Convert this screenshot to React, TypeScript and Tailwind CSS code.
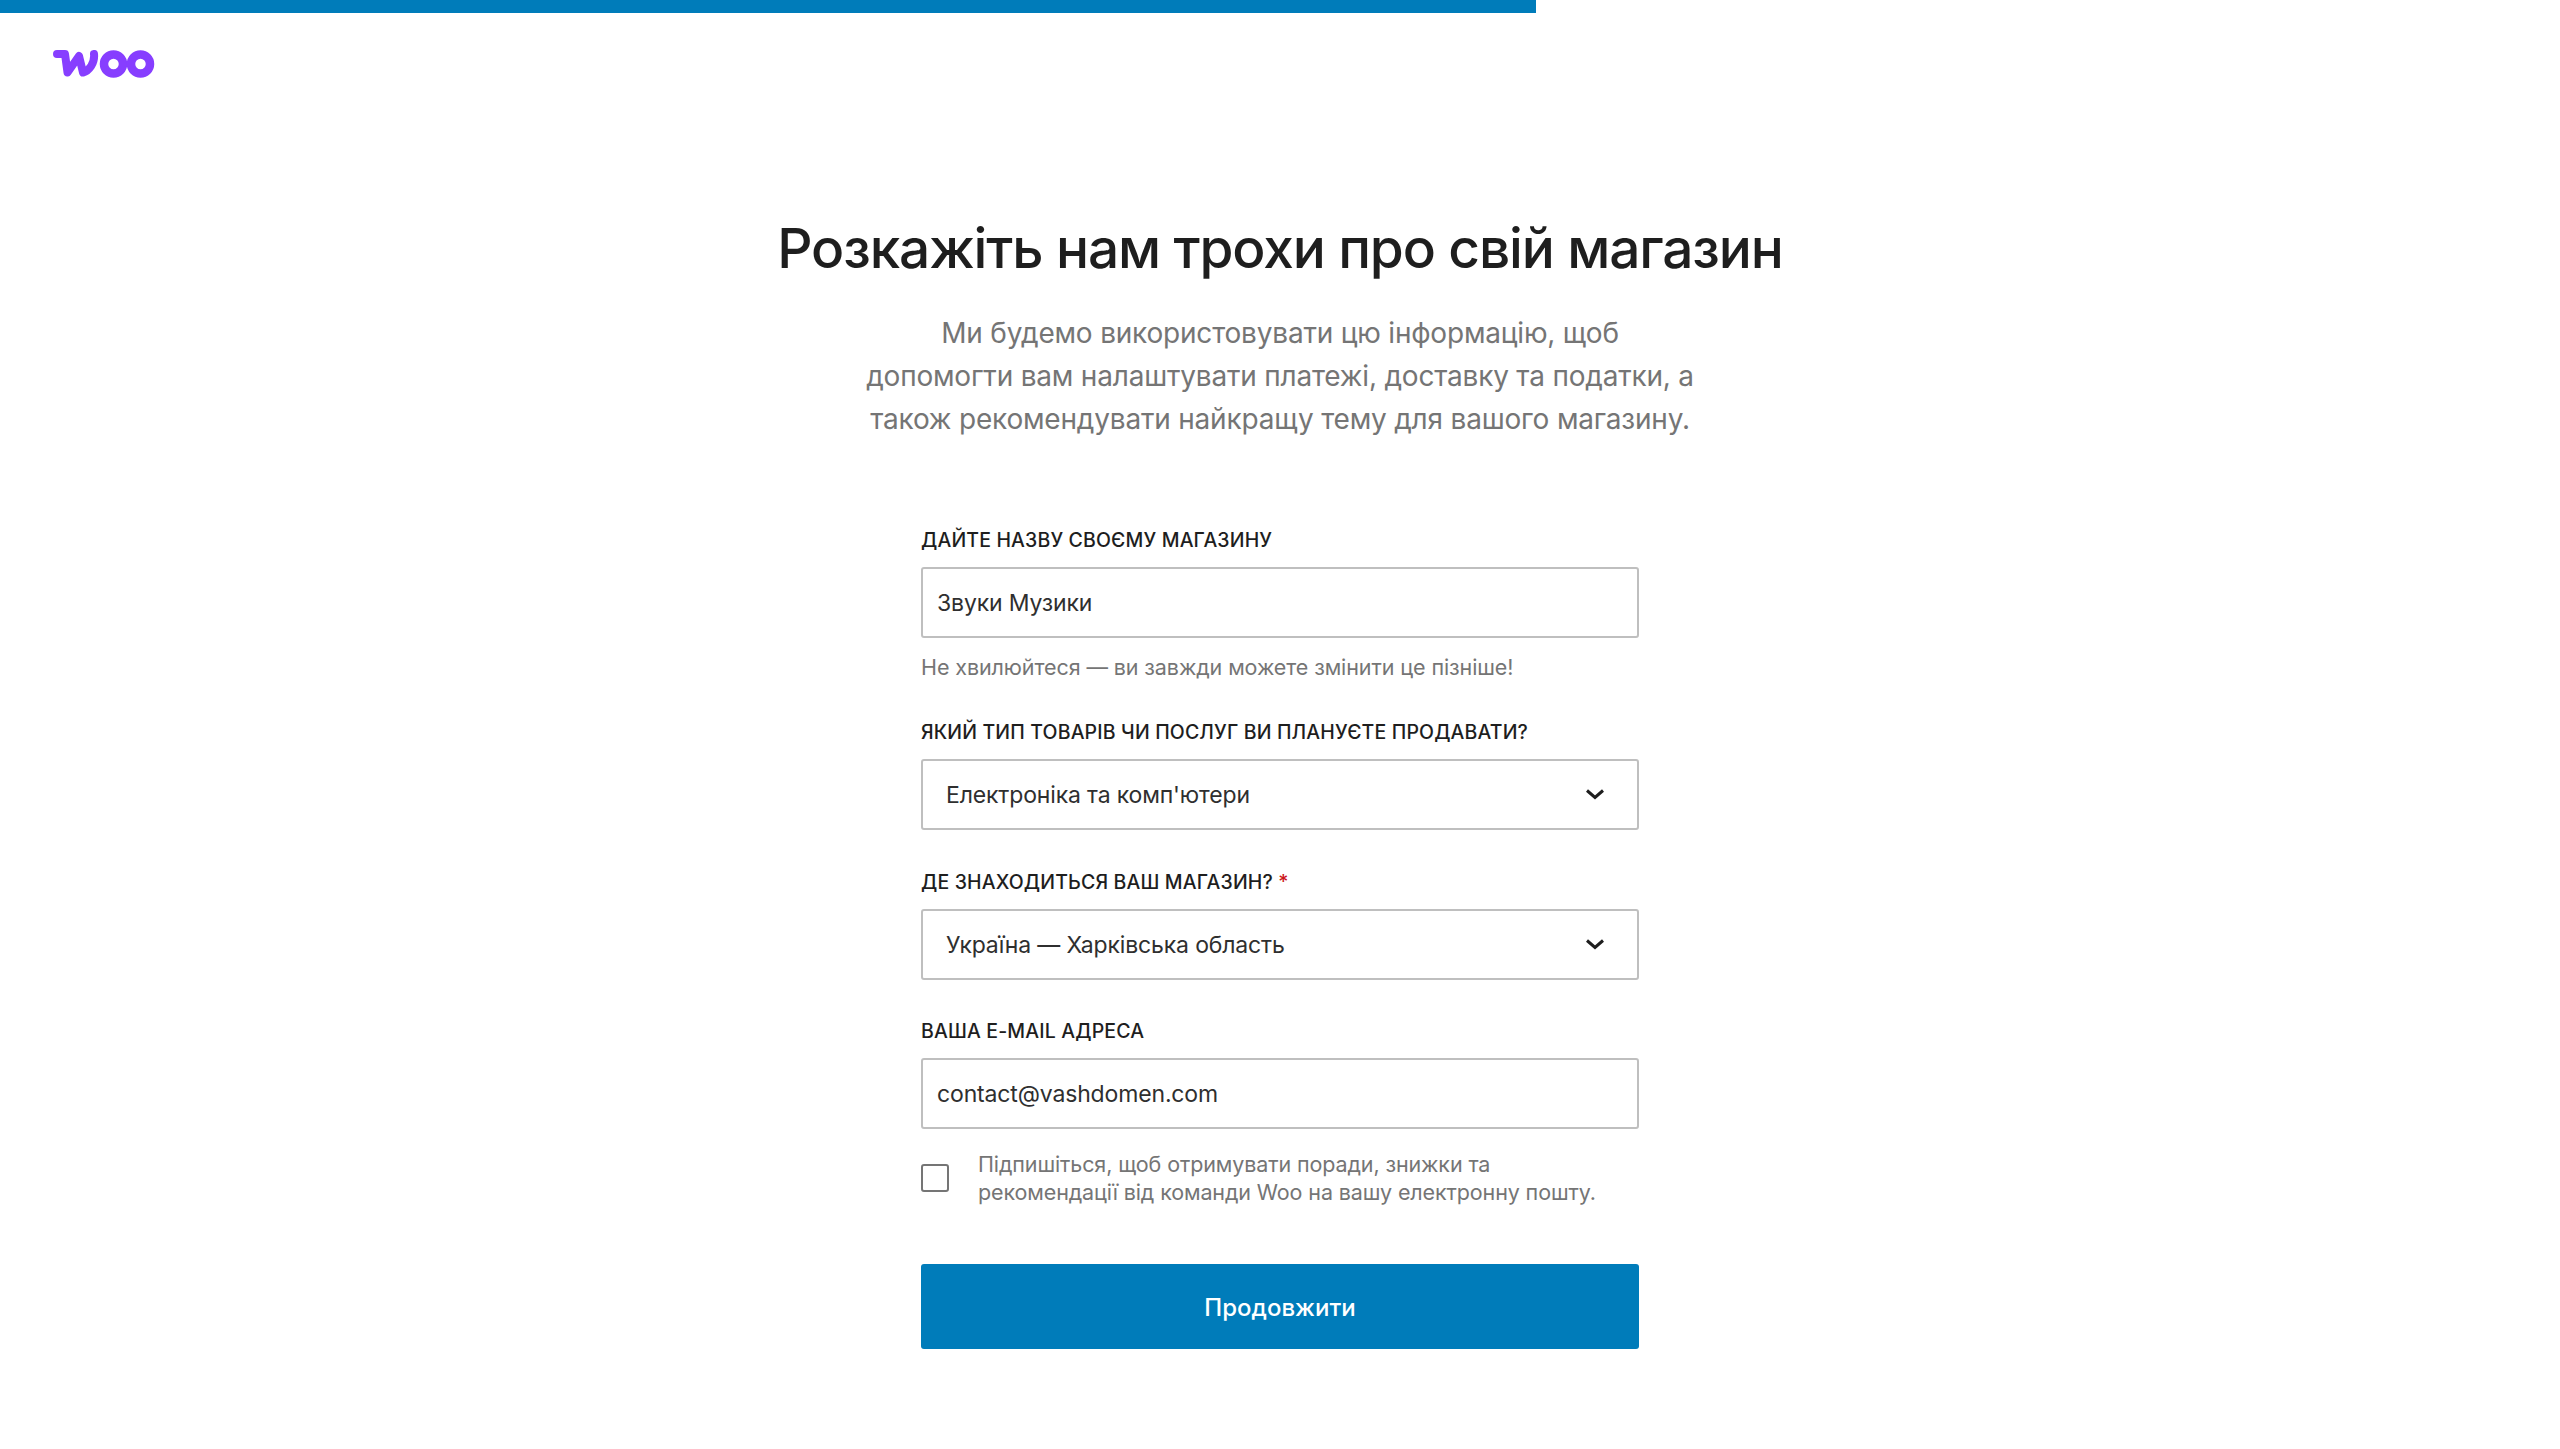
function Label({ children }: { children: React.ReactNode }) {
  return (
    <label className="block h-[24px] text-[19.5px] leading-[26px] font-medium uppercase text-[#1e1e1e] tracking-[0.15px]">
      {children}
    </label>
  );
}

function Field({ value }: { value: string }) {
  return (
    <div className="mt-[16px] flex h-[71px] items-center rounded-[3px] border-2 border-[#bfbfbf] bg-white pl-[14px] pt-[2px] text-[23px] tracking-[-0.15px] text-[#2f2f2f]">
      {value}
    </div>
  );
}

function Select({ value }: { value: string }) {
  return (
    <div className="mt-[16px] flex h-[71px] items-center justify-between rounded-[3px] border-2 border-[#bfbfbf] bg-white pl-[23px] pr-[33px] text-[23px] tracking-[-0.15px] text-[#2f2f2f]">
      <span className="pt-[2px]">{value}</span>
      <svg width="18" height="11" viewBox="0 0 18 11" fill="none" className="-mt-[1px]">
        <path d="M1 1.5 L9 8.5 L17 1.5" stroke="#1e1e1e" strokeWidth="3" />
      </svg>
    </div>
  );
}

export default function App() {
  return (
    <div className="min-h-[1449px] bg-white font-['Inter','Liberation_Sans',sans-serif]">
      <div className="h-[13px] w-[60%] bg-[#007cba]" />
      <header className="h-[88px] pl-[53px] pt-[37px]">
        <svg width="102" height="28" viewBox="0 0 102 28" fill="none">
          <path
            d="M4 4 H12 L14.5 22.5 L26 6 L30 22.5 C36 21 42 13 41 4"
            stroke="#873eff"
            strokeWidth="8"
            strokeLinecap="round"
            strokeLinejoin="round"
          />
          <circle cx="60.5" cy="14" r="9.5" stroke="#873eff" strokeWidth="8.5" />
          <circle cx="87.5" cy="14" r="9.5" stroke="#873eff" strokeWidth="8.5" />
        </svg>
      </header>
      <main className="flex flex-col items-center">
        <h1 className="mt-[112px] text-[55px] leading-[70px] font-medium text-[#1e1e1e] tracking-[-1.14px]">
          Розкажіть нам трохи про свій магазин
        </h1>
        <p className="mt-[29px] w-[860px] text-center text-[28px] leading-[43px] tracking-[-0.2px] text-[#757575]">
          Ми будемо використовувати цю інформацію, щоб
          <br />
          допомогти вам налаштувати платежі, доставку та податки, а
          <br />
          також рекомендувати найкращу тему для вашого магазину.
        </p>
        <form className="mt-[86px] w-[718px]">
          <Label>Дайте назву своєму магазину</Label>
          <Field value="Звуки Музики" />
          <p className="mt-[16px] text-[21.5px] leading-[26px] tracking-[-0.1px] text-[#757575]">
            Не хвилюйтеся — ви завжди можете змінити це пізніше!
          </p>
          <div className="mt-[39px]">
            <Label>Який тип товарів чи послуг ви плануєте продавати?</Label>
          </div>
          <Select value="Електроніка та комп'ютери" />
          <div className="mt-[39px]">
            <Label>
              Де знаходиться ваш магазин? <span className="text-[#cc1818]">*</span>
            </Label>
          </div>
          <Select value="Україна — Харківська область" />
          <div className="mt-[38px]">
            <Label>Ваша e-mail адреса</Label>
          </div>
          <Field value="contact@vashdomen.com" />
          <div className="mt-[21px] flex items-center gap-[29px]">
            <span className="h-[28px] w-[28px] shrink-0 rounded-[3px] border-2 border-[#757575] bg-white" />
            <p className="text-[21.5px] leading-[28px] tracking-[-0.12px] text-[#757575]">
              Підпишіться, щоб отримувати поради, знижки та
              <br />
              рекомендації від команди Woo на вашу електронну пошту.
            </p>
          </div>
          <button
            type="button"
            className="mt-[58px] h-[85px] w-full rounded-[3px] bg-[#007cba] pt-[2px] text-[24px] font-medium text-white"
          >
            Продовжити
          </button>
        </form>
      </main>
    </div>
  );
}
